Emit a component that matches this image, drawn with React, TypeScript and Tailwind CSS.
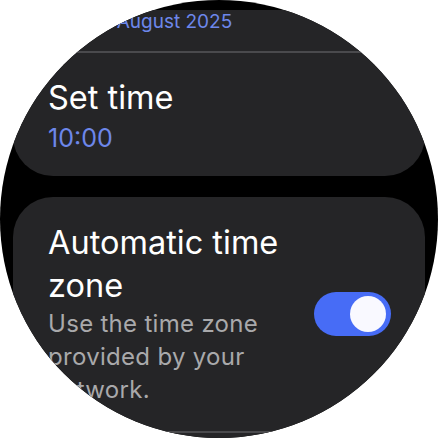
import React from 'react';

const font = { fontFamily: 'Inter, Roboto, "Noto Sans", sans-serif' };

function Toggle({ on }: { on: boolean }) {
  return (
    <div
      className={`flex h-[44px] w-[77px] shrink-0 items-center rounded-full px-[5px] ${
        on ? 'justify-end bg-[#476cf6]' : 'justify-start bg-[#5a5a5e]'
      }`}
    >
      <div className="h-[36px] w-[36px] rounded-full bg-[#f9f9ff]" />
    </div>
  );
}

export default function App() {
  return (
    <div className="h-[438px] w-[438px] bg-white" style={font}>
      <div className="h-[438px] w-[438px] overflow-hidden rounded-full bg-black">
        <div className="flex flex-col gap-[21px] px-[13px] pt-[10px]">
          {/* date + time card (scrolled partly off the top) */}
          <div className="rounded-[40px] bg-[#252527] pb-[22px]">
            <div className="px-[35px] pb-[17px]">
              <p className="whitespace-nowrap text-[19px] leading-[24px] text-[#6d87ea]">Tue, 12 August 2025</p>
            </div>
            <div className="mx-[35px] h-[2px] bg-[#4a4a4d]" />
            <div className="px-[35px] pt-[25px]">
              <p className="text-[32.5px] leading-[40px] text-white">Set time</p>
              <p className="mt-[4px] text-[25px] leading-[32px] text-[#6d87ea]">10:00</p>
            </div>
          </div>

          {/* time zone card */}
          <div className="rounded-[40px] bg-[#252527] pt-[24px]">
            <div className="flex items-center gap-[14px] pl-[35px] pr-[34px] pb-[25px]">
              <div className="w-[252px]">
                <p className="text-[32.5px] leading-[43px] text-white">Automatic time zone</p>
                <p className="text-[24px] leading-[33px] tracking-[0.3px] text-[#a9a9ab]">
                  Use the time zone provided by your network.
                </p>
              </div>
              <Toggle on />
            </div>
            <div className="mx-[35px] h-[2px] bg-[#4a4a4d]" />
            <div className="h-[60px]" />
          </div>
        </div>
      </div>
    </div>
  );
}
